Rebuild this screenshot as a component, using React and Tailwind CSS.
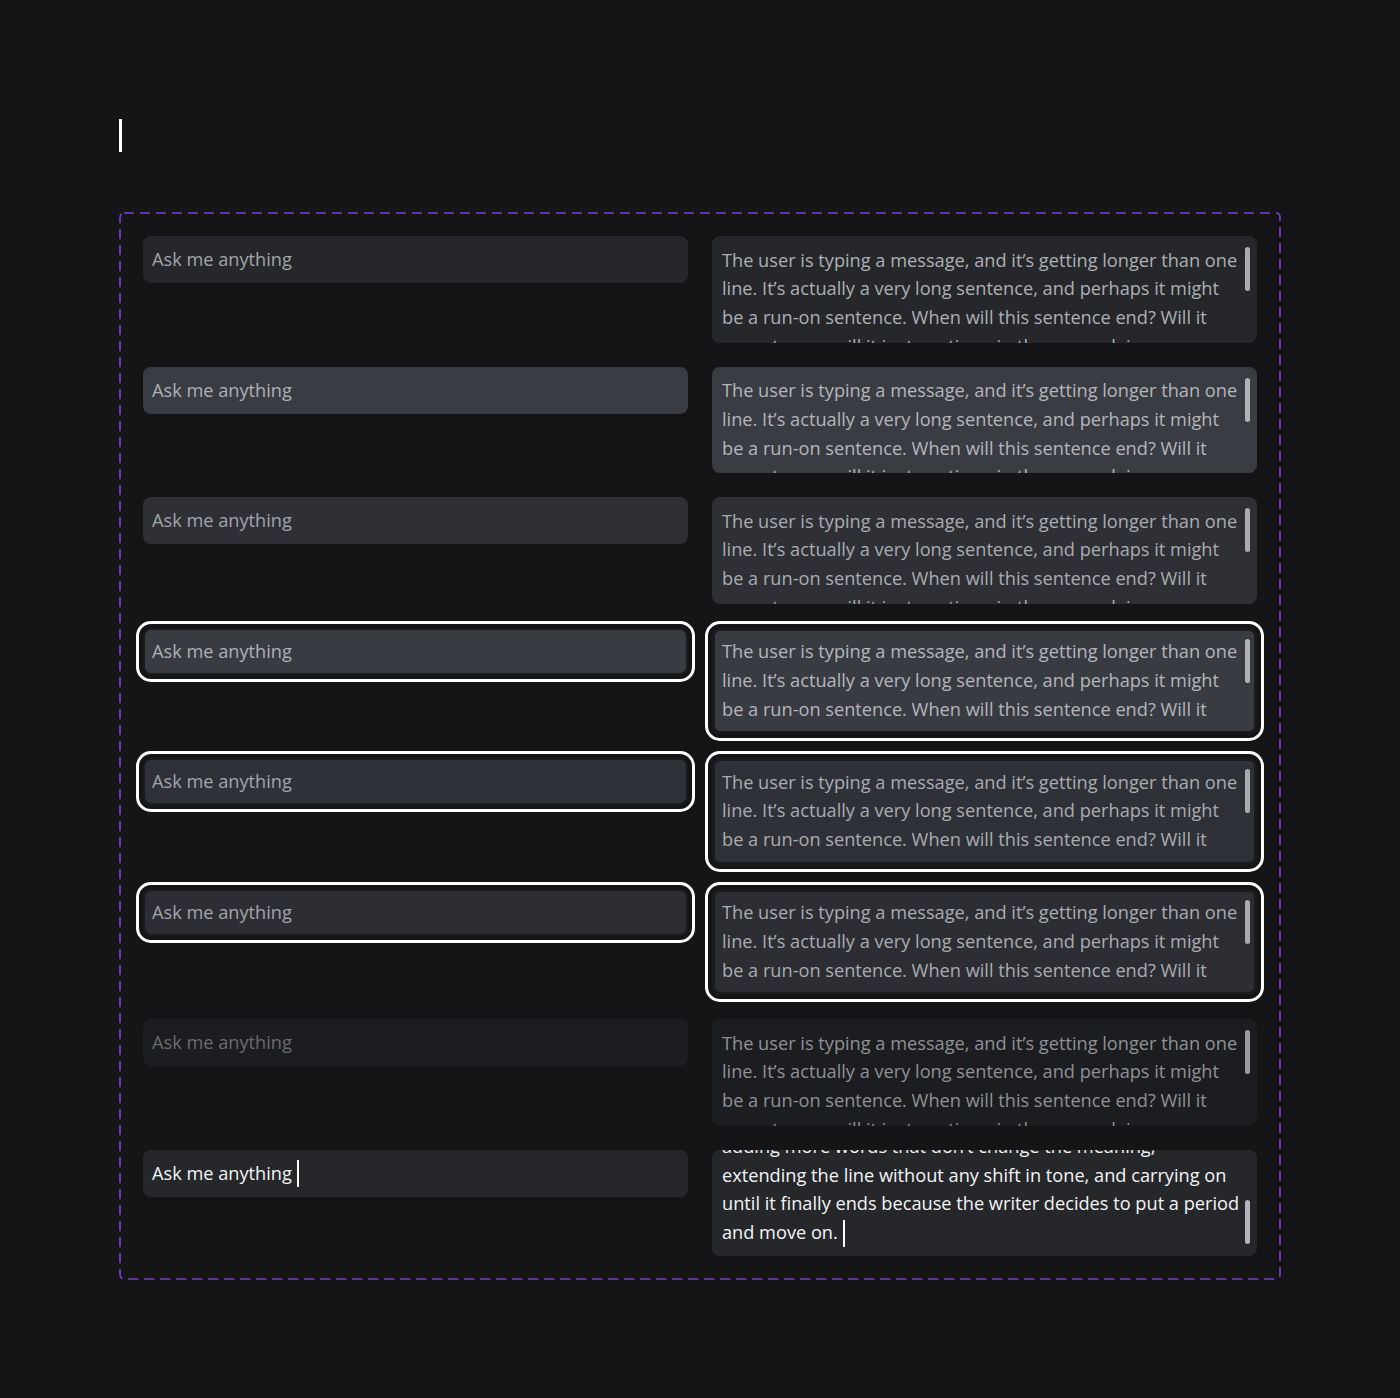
import React from "react";

const LINES = [
  "The user is typing a message, and it’s getting longer than one",
  "line. It’s actually a very long sentence, and perhaps it might",
  "be a run-on sentence. When will this sentence end? Will it",
  "ever stop, or will it just continue in the same plain way,",
  "adding more words that don’t change the meaning,",
  "extending the line without any shift in tone, and carrying on",
  "until it finally ends because the writer decides to put a period",
  "and move on.",
];

const FONT = "font-['Open_Sans','Noto_Sans',sans-serif]";

// Visual states for each demo row
const ROWS = [
  { key: "default", bg: "bg-[#25272b]", text: "text-[#a3a5aa]", area: "text-[#aeb0b4]", thumb: "bg-[#a9abaf]" },
  { key: "hover", bg: "bg-[#3a3c44]", text: "text-[#aeb0b5]", area: "text-[#b4b6ba]", thumb: "bg-[#b0b2b6]" },
  { key: "active", bg: "bg-[#2e3036]", text: "text-[#a3a5aa]", area: "text-[#aaacb0]", thumb: "bg-[#a9abaf]" },
  { key: "focus-hover", bg: "bg-[#393b43]", text: "text-[#aeb0b5]", area: "text-[#b4b6ba]", thumb: "bg-[#b0b2b6]", focus: true },
  { key: "focus-active", bg: "bg-[#2f3138]", text: "text-[#a3a5aa]", area: "text-[#aaacb0]", thumb: "bg-[#a9abaf]", focus: true },
  { key: "focus", bg: "bg-[#2c2e34]", text: "text-[#a3a5aa]", area: "text-[#aaacb0]", thumb: "bg-[#a9abaf]", focus: true },
  { key: "disabled", bg: "bg-[#1c1d20]", text: "text-[#6a6c71]", area: "text-[#8f9196]", thumb: "bg-[#9a9ca0]" },
  { key: "filled", bg: "bg-[#25272b]", text: "text-[#f4f4f5]", area: "text-[#f4f4f5]", thumb: "bg-[#b4b6ba]", filled: true },
];

function Caret({ className = "" }) {
  return <span className={`inline-block w-[2px] h-[27px] bg-white align-middle ${className}`} />;
}

function Input({ row }) {
  const focusCls = row.focus
    ? "outline-[3px] outline-white outline-offset-[4px] border-2 border-[#1a1b1e] px-[7px]"
    : "px-[9px]";
  return (
    <div
      className={`h-[47px] rounded-lg ${row.bg} ${focusCls} flex items-center ${FONT} text-[18.2px] leading-[28.5px] ${row.text}`}
    >
      <span className="whitespace-nowrap">Ask me anything</span>
      {row.filled && <Caret className="ml-[5px]" />}
    </div>
  );
}

function TextArea({ row }) {
  const focusCls = row.focus
    ? "outline-[3px] outline-white outline-offset-[4px] border-[3px] border-[#1a1b1e] pl-[7px] pr-[10px] pt-[6.5px] pb-[7px]"
    : "pl-[10px] pr-[20px] pt-[9.5px] pb-[9px]";
  const thumbPos = row.filled
    ? "right-[7px] bottom-[12px]"
    : row.focus
    ? "right-[4px] top-[8px]"
    : "right-[7px] top-[11px]";
  const shown = row.filled ? LINES : LINES.slice(0, 5);
  return (
    <div
      className={`relative h-[106.5px] rounded-lg overflow-hidden ${row.bg} ${focusCls} flex flex-col ${
        row.filled ? "justify-end" : "justify-start"
      } ${FONT} text-[18.2px] leading-[28.8px] ${row.area}`}
    >
      <div className={row.focus ? "h-[86.4px] overflow-hidden shrink-0" : "contents"}>
        {shown.map((line, i) => (
          <div key={i} className="whitespace-nowrap shrink-0">
            {line}
            {row.filled && i === shown.length - 1 && <Caret className="ml-[5px] -mt-[2px]" />}
          </div>
        ))}
      </div>
      <span className={`absolute w-[5px] h-[44px] rounded-full ${row.thumb} ${thumbPos}`} />
    </div>
  );
}

export default function App() {
  return (
    <div className="min-h-screen bg-[#151517] pt-[119px] px-[119px] pb-[119px]">
      <div className="h-[33px] w-[3px] bg-white" />
      <div className="relative mt-[60px] p-6">
        <svg className="absolute inset-0 w-full h-full pointer-events-none" aria-hidden="true">
          <rect
            x="1"
            y="1"
            rx="4"
            className="w-[calc(100%-2px)] h-[calc(100%-2px)]"
            fill="none"
            stroke="#7b3fe0"
            strokeWidth="1.6"
            strokeDasharray="10 6"
          />
        </svg>
        <div className="grid grid-cols-2 gap-6 items-start">
          {ROWS.map((row) => (
            <React.Fragment key={row.key}>
              <Input row={row} />
              <TextArea row={row} />
            </React.Fragment>
          ))}
        </div>
      </div>
    </div>
  );
}
